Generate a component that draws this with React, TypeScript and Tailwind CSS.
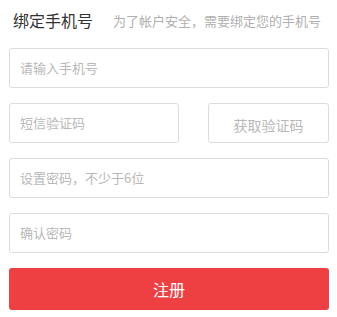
import React from "react";

const font = { fontFamily: '"Noto Sans CJK SC", "Noto Sans", sans-serif' };

function Field({ placeholder, className = "" }: { placeholder: string; className?: string }) {
  return (
    <div
      className={`h-[40px] border border-[#dcdcdc] rounded-[3px] bg-white flex items-center pl-[10px] text-[13px] text-[#b8b8b8] ${className}`}
    >
      {placeholder}
    </div>
  );
}

export default function App() {
  return (
    <div className="w-[337px] h-[317px] bg-white pl-[9px] pr-[8px] pt-[0px]" style={font}>
      <div className="h-[40px] flex items-center pl-[4px]">
        <span className="text-[16px] text-[#333333] leading-none">绑定手机号</span>
        <span className="ml-[20px] text-[13px] text-[#b0b0b0] leading-none">为了帐户安全，需要绑定您的手机号</span>
      </div>
      <Field placeholder="请输入手机号" className="mt-[8px]" />
      <div className="mt-[15px] flex">
        <Field placeholder="短信验证码" className="w-[170px]" />
        <div className="ml-auto w-[121px] h-[40px] border border-[#dcdcdc] rounded-[3px] flex items-center justify-center pt-[5px] text-[14px] text-[#b8b8b8]">
          获取验证码
        </div>
      </div>
      <Field placeholder="设置密码，不少于6位" className="mt-[15px]" />
      <Field placeholder="确认密码" className="mt-[15px]" />
      <div className="mt-[15px] h-[42px] rounded-[3px] bg-[#ee4043] flex items-center justify-center text-[16px] text-white">
        注册
      </div>
    </div>
  );
}
